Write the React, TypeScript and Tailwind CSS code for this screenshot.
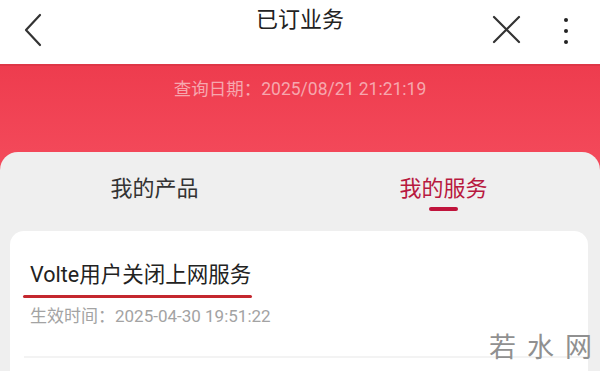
import React from "react";

const font = { fontFamily: '"Roboto", "Noto Sans CJK SC", sans-serif' };

export default function App() {
  return (
    <div className="relative w-[600px] h-[371px] overflow-hidden bg-white" style={font}>
      {/* Header */}
      <div className="relative h-[64px] bg-white">
        <div className="absolute left-0 right-0 top-[3px] text-center text-[22px] text-[#222]">已订业务</div>
        <svg className="absolute left-[22px] top-[13px]" width="22" height="34" viewBox="0 0 22 34">
          <path d="M18 2 L4 17 L18 32" fill="none" stroke="#333" strokeWidth="2.2" strokeLinecap="round" strokeLinejoin="round" />
        </svg>
        <svg className="absolute left-[492px] top-[15px]" width="29" height="29" viewBox="0 0 29 29">
          <path d="M2 2 L27 27 M27 2 L2 27" fill="none" stroke="#333" strokeWidth="2.2" strokeLinecap="round" />
        </svg>
        <div className="absolute left-[564px] top-[18px] flex flex-col gap-[7px]">
          <span className="block w-[4px] h-[4px] rounded-full bg-[#222]" />
          <span className="block w-[4px] h-[4px] rounded-full bg-[#222]" />
          <span className="block w-[4px] h-[4px] rounded-full bg-[#222]" />
        </div>
      </div>
      {/* Red band */}
      <div className="h-[110px] bg-gradient-to-b from-[#ee3c4e] to-[#f44b5c] border-t-2 border-[#de3646]">
        <div className="pt-[10px] text-center text-[17.5px] text-[#f6a7ae]">查询日期：2025/08/21 21:21:19</div>
      </div>
      {/* Gray card */}
      <div className="absolute left-0 right-0 top-[152px] bottom-0 bg-[#efefef] rounded-t-[18px]">
        <div className="ml-[10px] mr-[12px] flex h-[79px]">
          <div className="flex-1 flex justify-center">
            <div className="pt-[20px] text-[22px] text-[#333]">我的产品</div>
          </div>
          <div className="flex-1 flex justify-center">
            <div className="flex flex-col items-center">
              <div className="pt-[20px] text-[22px] text-[#b8193f]">我的服务</div>
              <div className="mt-[2px] w-[29px] h-[4px] rounded-full bg-[#c0143c]" />
            </div>
          </div>
        </div>
        <div className="ml-[10px] mr-[12px] h-[200px] bg-white rounded-t-[14px]">
          <div className="pl-[20px] pt-[29px] text-[21.5px] leading-[29px] text-[#222]">Volte用户关闭上网服务</div>
          <div className="ml-[13px] mt-[6px] w-[229px] h-[3px] bg-[#c4282f] rounded-full" />
          <div className="pl-[20px] pt-[6px] text-[17px] leading-[24px] text-[#a3a3a3]">生效时间：2025-04-30 19:51:22</div>
          <div className="ml-[14px] mt-[28px] h-[2px] bg-[#f3f3f3]" />
        </div>
      </div>
      {/* watermark */}
      <div className="absolute left-[489px] top-[335px] flex gap-[11px] whitespace-nowrap text-[27px] text-[#909090] leading-none">
        <span>若</span>
        <span>水</span>
        <span>网</span>
      </div>
    </div>
  );
}
